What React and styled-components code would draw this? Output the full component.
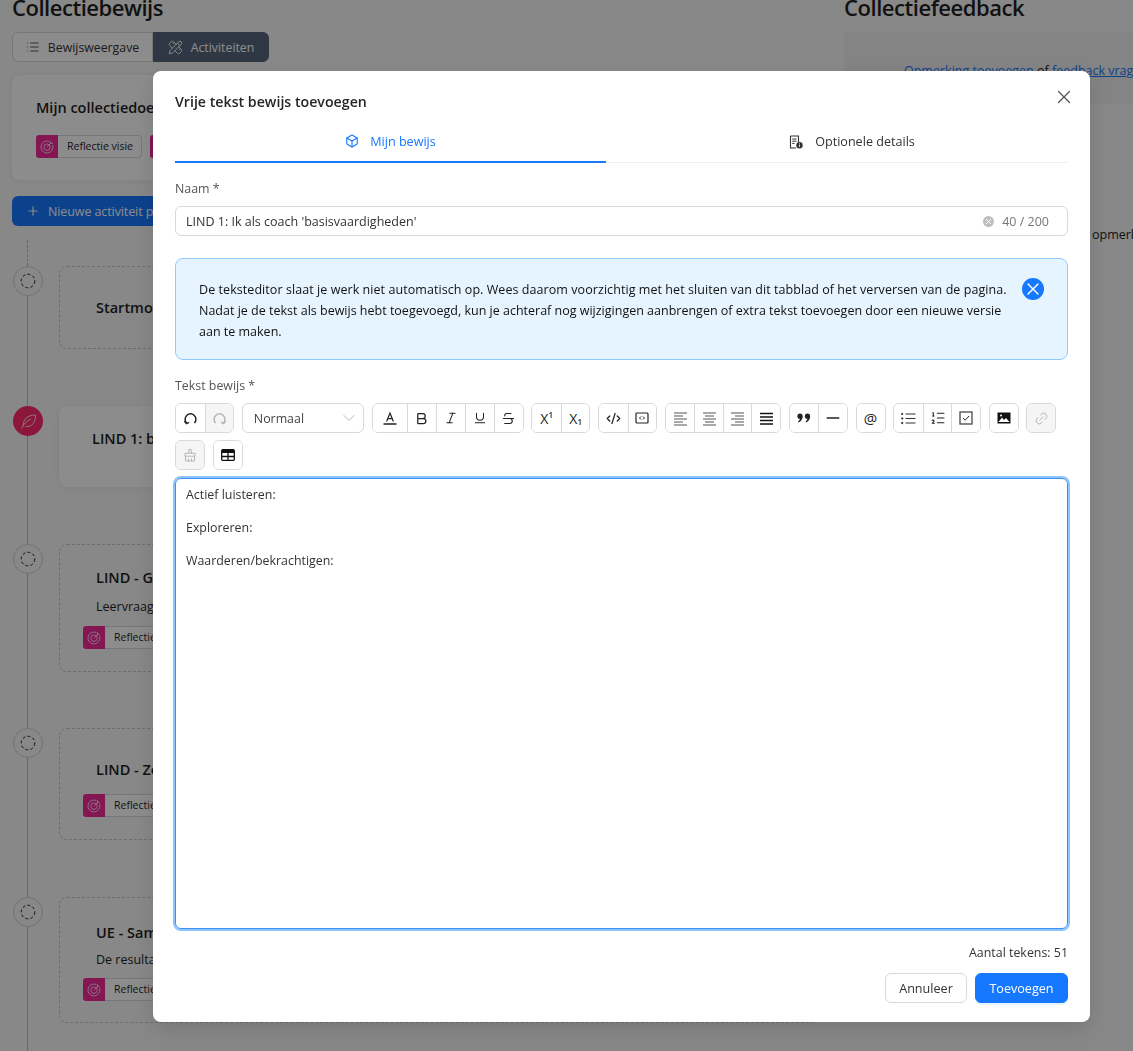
import styled, { createGlobalStyle } from 'styled-components';
import {
	Bold,
	Box,
	ChevronDown,
	CodeXml,
	Italic,
	Link2,
	List,
	ListOrdered,
	Minus,
	PencilRuler,
	Plus,
	Strikethrough,
	Underline,
	X,
} from 'lucide-react';

const font = `"Open Sans", "Noto Sans", "Liberation Sans", sans-serif`;

const GlobalStyle = createGlobalStyle`
	html, body {
		margin: 0;
		height: 100%;
		overflow: hidden;
		background: #f7f7f7;
	}
	body {
		font-family: ${font};
		font-size: 13px;
		color: #1f1f1f;
	}
	* { box-sizing: border-box; }
`;

/* ---- page behind the dialog ---- */
const Page = styled.div`
	display: flex;
	height: 1051px;
	overflow: hidden;
	padding: 0 0 0 12px;
`;
const LeftColumn = styled.div`
	width: 832px;
	flex-shrink: 0;
`;
const RightColumn = styled.div`
	flex: 1;
	min-width: 0;
	white-space: nowrap;
`;
const PageTitle = styled.h1`
	font-size: 22px;
	line-height: 30px;
	font-weight: 600;
	letter-spacing: -0.47px;
	margin: -8px 0 10px;
`;
const Segmented = styled.div`
	display: flex;
	width: 257px;
	height: 30px;
	margin-bottom: 13px;
`;
const Segment = styled.div`
	flex: ${(p) => (p.$active ? '0 0 116px' : '1')};
	display: flex;
	align-items: center;
	justify-content: center;
	gap: 8px;
	font-size: 12.3px;
	border: 1px solid ${(p) => (p.$active ? '#57657c' : '#d9d9d9')};
	background: ${(p) => (p.$active ? '#57657c' : '#fff')};
	color: ${(p) => (p.$active ? '#fff' : '#333')};
	border-radius: ${(p) => (p.$active ? '0 6px 6px 0' : '6px 0 0 6px')};
`;
const GoalCard = styled.div`
	height: 105px;
	background: #fff;
	border-radius: 8px;
	padding: 22px 24px;
	box-shadow: 0 1px 6px rgba(0, 0, 0, 0.06);
	margin-bottom: 16px;
`;
const CardHeading = styled.div`
	font-size: 14.5px;
	font-weight: 600;
	line-height: 22px;
	padding-left: ${(p) => p.$indent || 0}px;
`;
const TagRow = styled.div`
	display: flex;
	gap: 8px;
	margin-top: ${(p) => p.$top ?? 16}px;
`;
const Tag = styled.div`
	display: flex;
	height: 23px;
	font-size: 10.5px;
	line-height: 21px;
`;
const TagIcon = styled.div`
	width: 22px;
	background: #f02a98;
	border-radius: 3px 0 0 3px;
	display: flex;
	align-items: center;
	justify-content: center;
`;
const TagLabel = styled.div`
	padding: 0 8px 0 9px;
	border: 1px solid #d9d9d9;
	border-left: 0;
	border-radius: 0 4px 4px 0;
	background: #fff;
`;
const PrimaryBar = styled.div`
	display: flex;
	align-items: center;
	gap: 8px;
	width: 260px;
	height: 30px;
	background: #1677ff;
	border-radius: 6px;
	color: #fff;
	padding: 0 14px;
	font-size: 12.5px;
	letter-spacing: -0.1px;
	margin-bottom: 14px;
`;
const Timeline = styled.div`
	position: relative;
	display: flex;
	flex-direction: column;
`;
const TimelineStub = styled.div`
	height: 26px;
	margin-left: 15px;
	border-left: 1px dashed #bdbdbd;
`;
const TimelineLine = styled.div`
	position: absolute;
	left: 15px;
	top: 26px;
	bottom: 0;
	width: 1px;
	background: #bdbdbd;
`;
const TimelineRow = styled.div`
	display: flex;
	align-items: flex-start;
	gap: 16px;
	height: ${(p) => p.$height}px;
`;
const Node = styled.div`
	position: relative;
	width: 30px;
	height: 30px;
	margin-left: 1px;
	border-radius: 50%;
	flex-shrink: 0;
	display: flex;
	align-items: center;
	justify-content: center;
	background: ${(p) => (p.$active ? '#ff2a6e' : '#f7f7f7')};
	border: ${(p) => (p.$active ? '0' : '1px solid #d0d0d0')};
`;
const TimelineCard = styled.div`
	width: 760px;
	height: ${(p) => p.$height}px;
	border-radius: 8px;
	padding: ${(p) => p.$padding};
	border: ${(p) => (p.$solid ? '0' : '1px dashed #c8c8c8')};
	background: ${(p) => (p.$solid ? '#fff' : 'transparent')};
	box-shadow: ${(p) => (p.$solid ? '0 1px 6px rgba(0,0,0,.06)' : 'none')};
`;
const CardText = styled.div`
	font-size: 12.5px;
	line-height: 20px;
	margin-top: ${(p) => p.$top || 6}px;
	padding-left: ${(p) => p.$indent || 0}px;
`;
const FeedbackTitle = styled(PageTitle).attrs({ as: 'h2' })`
	letter-spacing: -0.45px;
`;
const FeedbackBox = styled.div`
	height: 72px;
	background: #f0f0f0;
	padding: 30px 0 0 60px;
	font-size: 12.5px;
	margin-bottom: 122px;
`;
const BlueLink = styled.span`
	color: #1677ff;
	text-decoration: underline;
`;
const FeedbackNote = styled.div`
	padding-left: 248px;
	font-size: 12.5px;
`;

/* ---- dialog ---- */
const Overlay = styled.div`
	position: fixed;
	inset: 0;
	background: rgba(0, 0, 0, 0.45);
`;
const Modal = styled.div`
	position: absolute;
	left: 153px;
	top: 71px;
	width: 937px;
	height: 951px;
	background: #fff;
	border-radius: 8px;
	padding: 20px 22px 19px;
	display: flex;
	flex-direction: column;
	box-shadow: 0 6px 16px rgba(0, 0, 0, 0.08), 0 9px 28px 8px rgba(0, 0, 0, 0.05);
`;
const ModalHeader = styled.div`
	display: flex;
	justify-content: space-between;
	height: 37px;
`;
const ModalTitle = styled.div`
	font-size: 14.2px;
	line-height: 22px;
	font-weight: 600;
	color: #262626;
`;
const CloseButton = styled.div`
	margin: -5px -7px 0 0;
	color: #555;
	height: 22px;
`;
const Tabs = styled.div`
	display: grid;
	grid-template-columns: 431px 1fr;
	height: 35px;
	border-bottom: 1px solid #f0f0f0;
	margin-bottom: 17px;
`;
const Tab = styled.div`
	display: flex;
	align-items: center;
	justify-content: center;
	gap: ${(p) => (p.$active ? '11px' : '12px')};
	padding-left: ${(p) => (p.$active ? '0' : '30px')};
	padding-bottom: 7px;
	height: ${(p) => (p.$active ? '35px' : '34px')};
	font-size: 12.6px;
	color: ${(p) => (p.$active ? '#1677ff' : '#333')};
	border-bottom: ${(p) => (p.$active ? '2px solid #1677ff' : '0')};
`;
const Label = styled.div`
	font-size: 12.4px;
	line-height: 18px;
	color: #555;
	margin-bottom: 8px;
`;
const InputBox = styled.div`
	display: flex;
	align-items: center;
	height: 30px;
	border: 1px solid #d9d9d9;
	border-radius: 6px;
	padding: 0 18px 0 10px;
	font-size: 12.5px;
	color: #333;
	margin-bottom: 22px;
`;
const InputValue = styled.div`
	flex: 1;
`;
const ClearDot = styled.div`
	width: 11px;
	height: 11px;
	border-radius: 50%;
	background: #bfbfbf;
	display: flex;
	align-items: center;
	justify-content: center;
	color: #fff;
	margin-right: 8px;
`;
const Counter = styled.div`
	color: #777;
`;
const Alert = styled.div`
	display: flex;
	align-items: flex-start;
	height: 102px;
	background: #e6f4ff;
	border: 1px solid #91caff;
	border-radius: 8px;
	padding: 20px 23px;
	margin-bottom: 17px;
`;
const AlertText = styled.div`
	width: 812px;
	flex-shrink: 0;
	font-size: 12.5px;
	line-height: 21px;
	color: #111;
	white-space: nowrap;
`;
const AlertLine = styled.div`
	letter-spacing: ${(p) => p.$spacing || 0}px;
`;
const AlertClose = styled.div`
	width: 22px;
	height: 22px;
	border-radius: 50%;
	background: #1677ff;
	color: #fff;
	display: flex;
	align-items: center;
	justify-content: center;
	margin: -1px 0 0 11px;
`;
const Toolbar = styled.div`
	display: flex;
	flex-wrap: wrap;
	column-gap: 7.8px;
	row-gap: 7px;
	margin-bottom: 8px;
`;
const Group = styled.div`
	display: flex;
	height: 30px;
	border: 1px solid #d9d9d9;
	border-radius: 6px;
	overflow: hidden;
	background: #fff;
`;
const ToolButton = styled.div`
	width: ${(p) => p.$width || 28.5}px;
	flex-shrink: 0;
	display: flex;
	align-items: center;
	justify-content: center;
	color: ${(p) => (p.$disabled ? '#b5b5b5' : '#222')};
	background: ${(p) => (p.$disabled ? '#f5f5f5' : '#fff')};
	font-size: ${(p) => p.$fontSize || 14}px;
	& + & {
		border-left: 1px solid #d9d9d9;
	}
`;
const Script = styled.span`
	font-size: 8px;
	font-weight: 600;
	position: relative;
	top: ${(p) => (p.$sub ? '3px' : '-4px')};
`;
const SelectBox = styled.div`
	display: flex;
	align-items: center;
	justify-content: space-between;
	width: 122px;
	height: 30px;
	border: 1px solid #d9d9d9;
	border-radius: 6px;
	padding: 0 4px 0 11px;
	font-size: 12.4px;
	color: #444;
`;
const Editor = styled.div`
	flex-shrink: 0;
	height: 451px;
	border: 1px solid #3d8ff5;
	border-radius: 6px;
	box-shadow: 0 0 0 2px #8cc4ff;
	padding: 6px 10px;
	font-size: 12.4px;
	color: #333;
	margin-bottom: 14px;
`;
const EditorLine = styled.p`
	margin: 0 0 14px;
	line-height: 19px;
`;
const CharCount = styled.div`
	text-align: right;
	font-size: 12.4px;
	line-height: 20px;
	color: #333;
	margin-bottom: 10px;
`;
const Footer = styled.div`
	display: flex;
	justify-content: flex-end;
	gap: 8px;
`;
const Button = styled.div`
	height: 30px;
	width: ${(p) => p.$width}px;
	display: flex;
	align-items: center;
	justify-content: center;
	border-radius: 6px;
	font-size: 12.6px;
	border: 1px solid ${(p) => (p.$primary ? '#1677ff' : '#d9d9d9')};
	background: ${(p) => (p.$primary ? '#1677ff' : '#fff')};
	color: ${(p) => (p.$primary ? '#fff' : '#333')};
	box-shadow: ${(p) => (p.$primary ? '0 2px 0 rgba(5,145,255,.1)' : 'none')};
`;

/* ---- drawn icons ---- */
function RadarIcon() {
	return (
		<svg width="14" height="14" viewBox="0 0 14 14" fill="none" stroke="#fff" strokeOpacity=".75" strokeWidth="1">
			<path d="M9.5 1.6A6 6 0 1 0 12.6 5" />
			<circle cx="7" cy="7.2" r="3.2" />
			<path d="M7 7.2 11.2 2.8M10.6 1.2v2.2h2.2" />
		</svg>
	);
}
function DashedCircle() {
	return (
		<svg width="16" height="16" viewBox="0 0 16 16" fill="none" stroke="#222" strokeWidth="1" strokeDasharray="3 2.2">
			<circle cx="8" cy="8" r="6.8" />
		</svg>
	);
}
function LeafIcon() {
	return (
		<svg width="17" height="17" viewBox="0 0 17 17" fill="none" stroke="#fff" strokeOpacity=".8" strokeWidth="1">
			<path d="M1.5 15.5C3.5 11 7 8 11 6" />
			<path d="M3.6 12.8C2.6 7 7 2 15.5 2c.4 7-3.6 12.4-10 11.6" />
		</svg>
	);
}
const FlipSvg = styled.svg`
	transform: ${(p) => (p.$flip ? 'scaleX(-1)' : 'none')};
`;
function UndoIcon({ flip }) {
	return (
		<FlipSvg $flip={flip} width="15" height="15" viewBox="0 0 15 15" fill="none" stroke="currentColor" strokeWidth="1.5">
			<path d="M3.6 12A5.4 5.4 0 1 1 11.4 12" />
			<path d="M1.4 10.2 3.5 12.6l2.6-1.2" strokeWidth="1.3" />
		</FlipSvg>
	);
}
function ColorIcon() {
	return (
		<svg width="16" height="16" viewBox="0 0 16 16" fill="none" stroke="currentColor" strokeWidth="1.2">
			<path d="M4.6 11.5 8 3l3.4 8.5M5.8 8.6h4.4" />
			<path d="M1.5 14h13" strokeWidth="1.5" />
		</svg>
	);
}
function EmbedIcon() {
	return (
		<svg width="14" height="14" viewBox="0 0 14 14" fill="none" stroke="currentColor" strokeWidth="1.2">
			<rect x="1" y="2" width="12" height="10" rx="1" />
			<path d="M6 5.5 4.5 7 6 8.5M8 5.5 9.5 7 8 8.5" strokeWidth="1" />
		</svg>
	);
}
// five lines for left/center/right, four heavy ones for justify
function AlignIcon({ align }) {
	const long = 13;
	const short = 9;
	const x = (w) => (align === 'left' ? 1 : align === 'right' ? 14 - w : 7.5 - w / 2);
	const rows = align === 'justify' ? [2.5, 6, 9.5, 13] : [2, 5, 8, 11, 14];
	return (
		<svg width="15" height="15" viewBox="0 0 15 15" fill="none" stroke={align === 'justify' ? '#111' : '#555'} strokeWidth={align === 'justify' ? 1.4 : 1.2}>
			{rows.map((y, i) => {
				const w = align === 'justify' || i % 2 === 0 ? long : short;
				return <path key={y} d={`M${x(w)} ${y}h${w}`} />;
			})}
		</svg>
	);
}
function QuoteIcon() {
	return (
		<svg width="14" height="10" viewBox="0 0 14 10" fill="#222">
			<circle cx="3" cy="3.2" r="2.6" />
			<path d="M5.5 3.5C5.5 6.5 4 8.5 1.5 9.5L1 8.6C2.5 7.6 3 6 3 4z" />
			<circle cx="10.5" cy="3.2" r="2.6" />
			<path d="M13 3.5c0 3-1.5 5-4 6l-.5-.9c1.5-1 2-2.6 2-4.6z" />
		</svg>
	);
}
function BulletIcon() {
	return (
		<svg width="15" height="13" viewBox="0 0 15 13" fill="#333" stroke="#333">
			<path d="M4.5 2h10M4.5 6.5h10M4.5 11h10" fill="none" strokeWidth="1.1" />
			<circle cx="1.2" cy="2" r=".7" />
			<circle cx="1.2" cy="6.5" r=".7" />
			<circle cx="1.2" cy="11" r=".7" />
		</svg>
	);
}
function CheckBoxIcon() {
	return (
		<svg width="14" height="14" viewBox="0 0 14 14" fill="none" stroke="#555" strokeWidth="1.4">
			<rect x="1" y="1" width="12" height="12" />
			<path d="M4 7.2 6.2 9.2 10 5" stroke="#222" strokeWidth="1" />
		</svg>
	);
}
function ImageIcon() {
	return (
		<svg width="14" height="12" viewBox="0 0 14 12">
			<rect x="0.5" y="0.5" width="13" height="11" fill="#111" />
			<path d="M1.5 10 5 5.5l2 2.4L9 6l3.5 4z" fill="#fff" />
			<circle cx="4" cy="3.4" r="1" fill="#fff" />
		</svg>
	);
}
function BrushIcon() {
	return (
		<svg width="14" height="14" viewBox="0 0 14 14" fill="none" stroke="currentColor" strokeWidth="1">
			<path d="M5.8 5.2V1.5h2.4v3.7" />
			<path d="M2 5.2h10v3H2zM2.5 8.2V13h9V8.2M5.5 13v-2.5M8.5 13v-2.5" />
		</svg>
	);
}
function TableIcon() {
	return (
		<svg width="14" height="12" viewBox="0 0 14 12" fill="none" stroke="#111" strokeWidth="1.3">
			<rect x="0.7" y="0.7" width="12.6" height="10.6" rx="1" />
			<path d="M1 2.5h12" strokeWidth="3.2" />
			<path d="M1 7.5h12M7 4v7" />
		</svg>
	);
}
function DetailsIcon() {
	return (
		<svg width="14" height="14" viewBox="0 0 14 14">
			<path d="M1.5 1h8v6M7 13H1.5V1" fill="none" stroke="#333" strokeWidth="1.1" />
			<path d="M3.2 4h4.4M3.2 6.2h4.4M3.2 8.4h2.4" stroke="#333" strokeWidth="1" />
			<circle cx="10.5" cy="10.2" r="3.2" fill="#333" />
			<path d="M10.5 9.6v2.2M10.5 8.3v.6" stroke="#fff" strokeWidth=".9" />
		</svg>
	);
}

function ReflectieTag({ label }) {
	return (
		<Tag>
			<TagIcon>
				<RadarIcon />
			</TagIcon>
			<TagLabel>{label}</TagLabel>
		</Tag>
	);
}

function App() {
	return (
		<>
			<GlobalStyle />
			<Page>
				<LeftColumn>
					<PageTitle>Collectiebewijs</PageTitle>
					<Segmented>
						<Segment>
							<List size={14} strokeWidth={1.8} color="#555" />
							Bewijsweergave
						</Segment>
						<Segment $active>
							<PencilRuler size={15} strokeWidth={1.6} />
							Activiteiten
						</Segment>
					</Segmented>
					<GoalCard>
						<CardHeading>Mijn collectiedoelen</CardHeading>
						<TagRow>
							<ReflectieTag label="Reflectie visie" />
							<ReflectieTag label="Reflectie visie" />
						</TagRow>
					</GoalCard>
					<PrimaryBar>
						<Plus size={14} strokeWidth={2} />
						Nieuwe activiteit plannen
					</PrimaryBar>
					<Timeline>
						<TimelineStub />
						<TimelineLine />
						<TimelineRow $height={140}>
							<Node>
								<DashedCircle />
							</Node>
							<TimelineCard $height={83} $padding="30px 36px">
								<CardHeading>Startmoment</CardHeading>
							</TimelineCard>
						</TimelineRow>
						<TimelineRow $height={138}>
							<Node $active>
								<LeafIcon />
							</Node>
							<TimelineCard $solid $height={81} $padding="22px 33px">
								<CardHeading>LIND 1: basis</CardHeading>
							</TimelineCard>
						</TimelineRow>
						<TimelineRow $height={184}>
							<Node>
								<DashedCircle />
							</Node>
							<TimelineCard $height={128} $padding="22px 36px 0 23px">
								<CardHeading $indent={13}>LIND - Gesprek</CardHeading>
								<CardText $indent={13} $top={8}>Leervraag</CardText>
								<TagRow $top={9}>
									<ReflectieTag label="Reflectie visie" />
								</TagRow>
							</TimelineCard>
						</TimelineRow>
						<TimelineRow $height={169}>
							<Node>
								<DashedCircle />
							</Node>
							<TimelineCard $height={112} $padding="30px 36px 0 23px">
								<CardHeading $indent={13}>LIND - Zelf</CardHeading>
								<TagRow $top={13}>
									<ReflectieTag label="Reflectie visie" />
								</TagRow>
							</TimelineCard>
						</TimelineRow>
						<TimelineRow $height={160}>
							<Node>
								<DashedCircle />
							</Node>
							<TimelineCard $height={126} $padding="24px 36px 0 23px">
								<CardHeading $indent={13}>UE - Samen</CardHeading>
								<CardText $indent={13}>De resultaten</CardText>
								<TagRow $top={8}>
									<ReflectieTag label="Reflectie visie" />
								</TagRow>
							</TimelineCard>
						</TimelineRow>
					</Timeline>
				</LeftColumn>
				<RightColumn>
					<FeedbackTitle>Collectiefeedback</FeedbackTitle>
					<FeedbackBox>
						<BlueLink>Opmerking toevoegen</BlueLink> of <BlueLink>feedback vragen</BlueLink>
					</FeedbackBox>
					<FeedbackNote>opmerkingen</FeedbackNote>
				</RightColumn>
			</Page>

			<Overlay>
				<Modal>
					<ModalHeader>
						<ModalTitle>Vrije tekst bewijs toevoegen</ModalTitle>
						<CloseButton>
							<X size={22} strokeWidth={1.4} />
						</CloseButton>
					</ModalHeader>
					<Tabs>
						<Tab $active>
							<Box size={14} strokeWidth={1.9} />
							Mijn bewijs
						</Tab>
						<Tab>
							<DetailsIcon />
							Optionele details
						</Tab>
					</Tabs>
					<Label>Naam *</Label>
					<InputBox>
						<InputValue>LIND 1: Ik als coach 'basisvaardigheden'</InputValue>
						<ClearDot>
							<X size={9} strokeWidth={2.4} />
						</ClearDot>
						<Counter>40 / 200</Counter>
					</InputBox>
					<Alert>
						<AlertText>
							<AlertLine $spacing={0.065}>
								De teksteditor slaat je werk niet automatisch op. Wees daarom voorzichtig met het sluiten van dit tabblad of het verversen van de pagina.
							</AlertLine>
							<AlertLine>
								Nadat je de tekst als bewijs hebt toegevoegd, kun je achteraf nog wijzigingen aanbrengen of extra tekst toevoegen door een nieuwe versie
							</AlertLine>
							<AlertLine>aan te maken.</AlertLine>
						</AlertText>
						<AlertClose>
							<X size={20} strokeWidth={1.7} />
						</AlertClose>
					</Alert>
					<Label>Tekst bewijs *</Label>
					<Toolbar>
						<Group>
							<ToolButton $width={29}><UndoIcon /></ToolButton>
							<ToolButton $width={28} $disabled><UndoIcon flip /></ToolButton>
						</Group>
						<SelectBox>
							Normaal
							<ChevronDown size={20} strokeWidth={1} color="#aaa" />
						</SelectBox>
						<Group>
							<ToolButton $width={34}><ColorIcon /></ToolButton>
							<ToolButton $width={29}><Bold size={15} strokeWidth={2} /></ToolButton>
							<ToolButton $width={29}><Italic size={14} strokeWidth={1.8} /></ToolButton>
							<ToolButton $width={29}><Underline size={14} strokeWidth={1.8} /></ToolButton>
							<ToolButton $width={29}><Strikethrough size={15} strokeWidth={1.8} /></ToolButton>
						</Group>
						<Group>
							<ToolButton>X<Script>1</Script></ToolButton>
							<ToolButton>X<Script $sub>1</Script></ToolButton>
						</Group>
						<Group>
							<ToolButton><CodeXml size={15} strokeWidth={2} /></ToolButton>
							<ToolButton><EmbedIcon /></ToolButton>
						</Group>
						<Group>
							<ToolButton><AlignIcon align="left" /></ToolButton>
							<ToolButton><AlignIcon align="center" /></ToolButton>
							<ToolButton><AlignIcon align="right" /></ToolButton>
							<ToolButton><AlignIcon align="justify" /></ToolButton>
						</Group>
						<Group>
							<ToolButton><QuoteIcon /></ToolButton>
							<ToolButton><Minus size={20} strokeWidth={1.6} /></ToolButton>
						</Group>
						<Group>
							<ToolButton $width={28} $fontSize={15}>@</ToolButton>
						</Group>
						<Group>
							<ToolButton><BulletIcon /></ToolButton>
							<ToolButton><ListOrdered size={16} strokeWidth={1.6} /></ToolButton>
							<ToolButton><CheckBoxIcon /></ToolButton>
						</Group>
						<Group>
							<ToolButton $width={28}><ImageIcon /></ToolButton>
						</Group>
						<Group>
							<ToolButton $width={28} $disabled><Link2 size={15} strokeWidth={1.5} transform="rotate(-45)" /></ToolButton>
						</Group>
						<Group>
							<ToolButton $width={28} $disabled><BrushIcon /></ToolButton>
						</Group>
						<Group>
							<ToolButton $width={28}><TableIcon /></ToolButton>
						</Group>
					</Toolbar>
					<Editor>
						<EditorLine>Actief luisteren:</EditorLine>
						<EditorLine>Exploreren:</EditorLine>
						<EditorLine>Waarderen/bekrachtigen:</EditorLine>
					</Editor>
					<CharCount>Aantal tekens: 51</CharCount>
					<Footer>
						<Button $width={82}>Annuleer</Button>
						<Button $primary $width={93}>Toevoegen</Button>
					</Footer>
				</Modal>
			</Overlay>
		</>
	);
}
export default App;
